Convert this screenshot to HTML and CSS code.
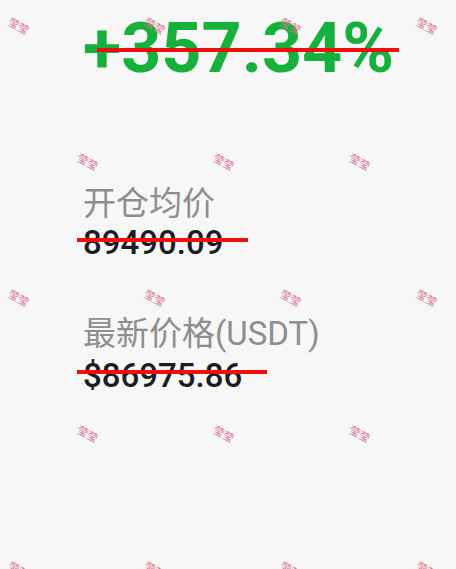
FILE: index.html
```html
<!DOCTYPE html>
<html lang="zh-CN">
<head>
    <meta charset="UTF-8">
    <meta name="viewport" content="width=device-width, initial-scale=1.0">
    <title>收益分享</title>
    <link rel="stylesheet" href="styles.css">
</head>
<body>

<main class="share">
    <div class="roi">
        <span class="roi-value">+357.34%</span>
        <i class="strike strike-roi"></i>
    </div>

    <section class="field field-entry">
        <div class="label">开仓均价</div>
        <div class="value">
            <span>89490.09</span>
            <i class="strike strike-entry"></i>
        </div>
    </section>

    <section class="field field-last">
        <div class="label">最新价格(USDT)</div>
        <div class="value">
            <span>$86975.86</span>
            <i class="strike strike-last"></i>
        </div>
    </section>
</main>

<!-- watermark layer -->
<div class="watermark">
    <div class="wm-row">
        <span>莹莹</span><span>莹莹</span><span>莹莹</span><span>莹莹</span>
    </div>
    <div class="wm-row wm-shift">
        <span>莹莹</span><span>莹莹</span><span>莹莹</span>
    </div>
    <div class="wm-row">
        <span>莹莹</span><span>莹莹</span><span>莹莹</span><span>莹莹</span>
    </div>
    <div class="wm-row wm-shift">
        <span>莹莹</span><span>莹莹</span><span>莹莹</span>
    </div>
    <div class="wm-row">
        <span>莹莹</span><span>莹莹</span><span>莹莹</span><span>莹莹</span>
    </div>
</div>

</body>
</html>
```

FILE: styles.css
```css
html, body {
    margin: 0;
    padding: 0;
    height: 100%;
}

body {
    font-family: Roboto, "Noto Sans CJK SC", sans-serif;
    background-color: #f7f7f7;
    color: #1b1d22;
    overflow: hidden;
    position: relative;
}

.share {
    padding: 13px 0 0 83px;
}

.roi {
    position: relative;
    display: inline-block;
}

.roi-value {
    display: block;
    font-size: 70px;
    font-weight: 700;
    line-height: 1;
    color: #16b03c;
}

.strike {
    position: absolute;
    height: 4px;
    background-color: #f20d0d;
}

.strike-roi {
    left: 14px;
    right: -5px;
    top: 35px;
}

.field {
    display: flex;
    flex-direction: column;
    align-items: flex-start;
}

.field-entry {
    margin-top: 102px;
}

.field-last {
    margin-top: 52px;
}

.label {
    font-size: 33px;
    line-height: 38px;
    color: #8e8e8e;
}

.value {
    position: relative;
    font-size: 33px;
    font-weight: 500;
    line-height: 40px;
}

.field-last .value {
    margin-top: 3px;
}

.strike-entry {
    left: -6px;
    right: -25px;
    top: 15px;
}

.strike-last {
    left: -6px;
    right: -25px;
    top: 14px;
}

/* watermark */
.watermark {
    position: absolute;
    top: 0;
    left: 0;
    right: 0;
    bottom: 0;
    pointer-events: none;
    display: flex;
    flex-direction: column;
    gap: 110px;
    padding-top: 14px;
}

.wm-row {
    display: flex;
    gap: 110px;
    padding-left: 5px;
}

.wm-row.wm-shift {
    padding-left: 74px;
}

.wm-row span {
    display: block;
    width: 26px;
    height: 26px;
    line-height: 26px;
    font-size: 11px;
    white-space: nowrap;
    text-align: center;
    color: #d7768f;
    transform: rotate(28deg);
}
```
